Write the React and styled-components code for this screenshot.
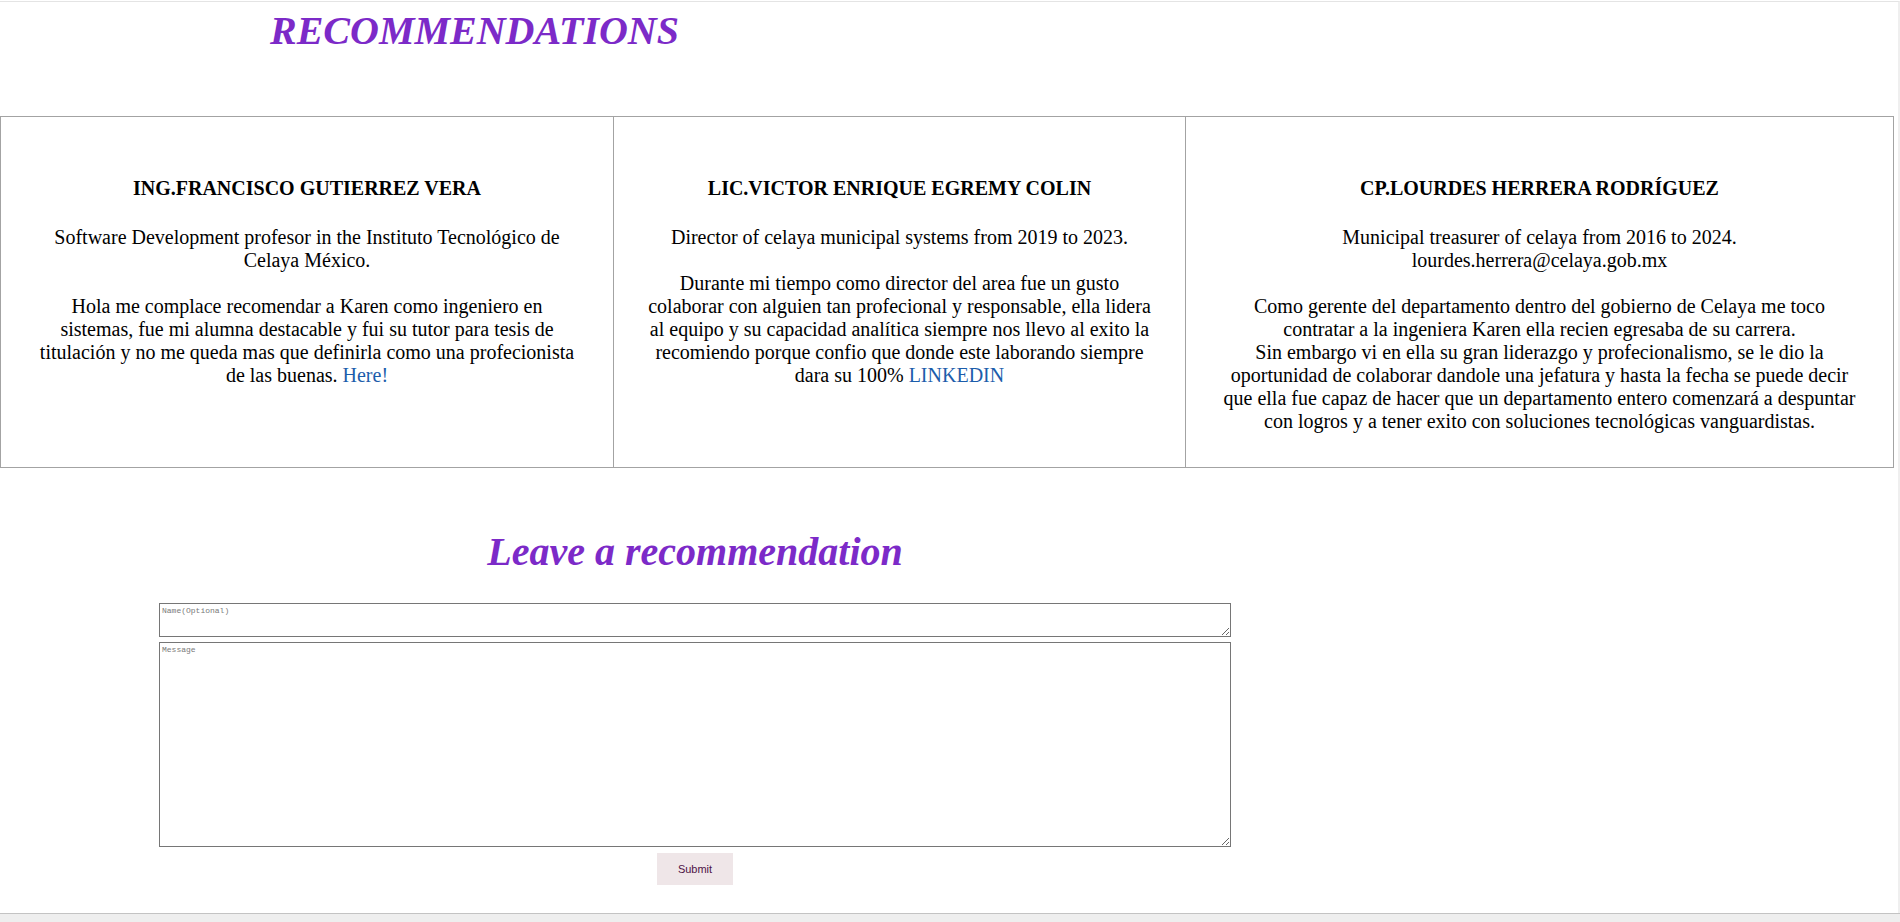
import styled, { createGlobalStyle } from "styled-components";

const GlobalStyle = createGlobalStyle`
  html, body {
    margin: 0;
    padding: 0;
    background: #fff;
  }
  body {
    font-family: "Liberation Serif", "Times New Roman", serif;
    color: #000;
    overflow: hidden;
  }
`;

const Page = styled.div`
  height: 922px;
  display: flex;
  flex-direction: column;
  box-sizing: border-box;
  padding-top: 1px;
`;

const Frame = styled.div`
  flex: 1;
  width: 1898px;
  border-top: 1px solid #e4e4e4;
  border-right: 2px solid #efefef;
  display: flex;
  flex-direction: column;
`;

const Header = styled.div`
  width: 949px;
  text-align: center;
`;

const Title = styled.h1`
  margin: 6px 0 0;
  font-size: 40px;
  line-height: 46px;
  font-style: italic;
  font-weight: bold;
  color: #7c2ac8;
`;

const Table = styled.div`
  margin-top: 62px;
  width: 1894px;
  box-sizing: border-box;
  display: grid;
  grid-template-columns: 612px 572px 708px;
  border: 1px solid #a3a3a3;
`;

const Cell = styled.div`
  box-sizing: border-box;
  padding: 60px 32px 34px;
  text-align: center;
  border-left: ${(p) => (p.$first ? "none" : "1px solid #a3a3a3")};
`;

const Name = styled.div`
  font-size: 20px;
  line-height: 23px;
  font-weight: bold;
  margin-bottom: 26px;
`;

const Text = styled.p`
  margin: ${(p) => (p.$spaced ? "23px 0 0" : "0")};
  font-size: 20px;
  line-height: 23px;
`;

const Link = styled.a`
  color: #1c5dab;
  text-decoration: none;
`;

const Form = styled.form`
  margin: 61px 0 0 159px;
  width: 1072px;
  display: flex;
  flex-direction: column;
  align-items: center;
`;

const FormTitle = styled.h2`
  margin: 0 0 28px;
  font-size: 40px;
  line-height: 46px;
  font-style: italic;
  font-weight: bold;
  color: #7c2ac8;
`;

const Field = styled.textarea`
  width: 1072px;
  height: ${(p) => p.$h}px;
  margin-top: ${(p) => p.$mt || 0}px;
  box-sizing: border-box;
  border: 1px solid #767676;
  padding: 2px;
  font-family: "Liberation Mono", "Courier New", monospace;
  font-size: 8px;
  background: #fff;
  &::placeholder {
    color: #7a7a7a;
  }
`;

const Submit = styled.button`
  margin-top: 6px;
  width: 76px;
  height: 32px;
  border: none;
  background: #efe6e8;
  color: #4e1246;
  font-family: "Liberation Sans", Arial, sans-serif;
  font-size: 11px;
  padding: 0;
`;

const BottomBar = styled.div`
  height: 9px;
  box-sizing: border-box;
  border-top: 1px solid #c3c3c3;
  background: #eeeeee;
`;

export default function App() {
  return (
    <Page>
      <GlobalStyle />
      <Frame>
        <Header>
          <Title>RECOMMENDATIONS</Title>
        </Header>

        <Table>
          <Cell $first>
            <Name>ING.FRANCISCO GUTIERREZ VERA</Name>
            <Text>Software Development profesor in the Instituto Tecnológico de Celaya México.</Text>
            <Text $spaced>
              Hola me complace recomendar a Karen como ingeniero en sistemas, fue mi alumna destacable y fui su
              tutor para tesis de titulación y no me queda mas que definirla como una profecionista de las buenas.{" "}
              <Link href="#">Here!</Link>
            </Text>
          </Cell>
          <Cell>
            <Name>LIC.VICTOR ENRIQUE EGREMY COLIN</Name>
            <Text>Director of celaya municipal systems from 2019 to 2023.</Text>
            <Text $spaced>
              Durante mi tiempo como director del area fue un gusto colaborar con alguien tan profecional y
              responsable, ella lidera al equipo y su capacidad analítica siempre nos llevo al exito la recomiendo
              porque confio que donde este laborando siempre dara su 100% <Link href="#">LINKEDIN</Link>
            </Text>
          </Cell>
          <Cell>
            <Name>CP.LOURDES HERRERA RODRÍGUEZ</Name>
            <Text>
              Municipal treasurer of celaya from 2016 to 2024.
              <br />
              lourdes.herrera@celaya.gob.mx
            </Text>
            <Text $spaced>
              Como gerente del departamento dentro del gobierno de Celaya me toco contratar a la ingeniera Karen
              ella recien egresaba de su carrera.
              <br />
              Sin embargo vi en ella su gran liderazgo y profecionalismo, se le dio la oportunidad de colaborar
              dandole una jefatura y hasta la fecha se puede decir que ella fue capaz de hacer que un departamento
              entero comenzará a despuntar con logros y a tener exito con soluciones tecnológicas vanguardistas.
            </Text>
          </Cell>
        </Table>

        <Form onSubmit={(e) => e.preventDefault()}>
          <FormTitle>Leave a recommendation</FormTitle>
          <Field $h={34} placeholder="Name(Optional)" />
          <Field $h={205} $mt={5} placeholder="Message" />
          <Submit type="submit">Submit</Submit>
        </Form>
      </Frame>
      <BottomBar />
    </Page>
  );
}
